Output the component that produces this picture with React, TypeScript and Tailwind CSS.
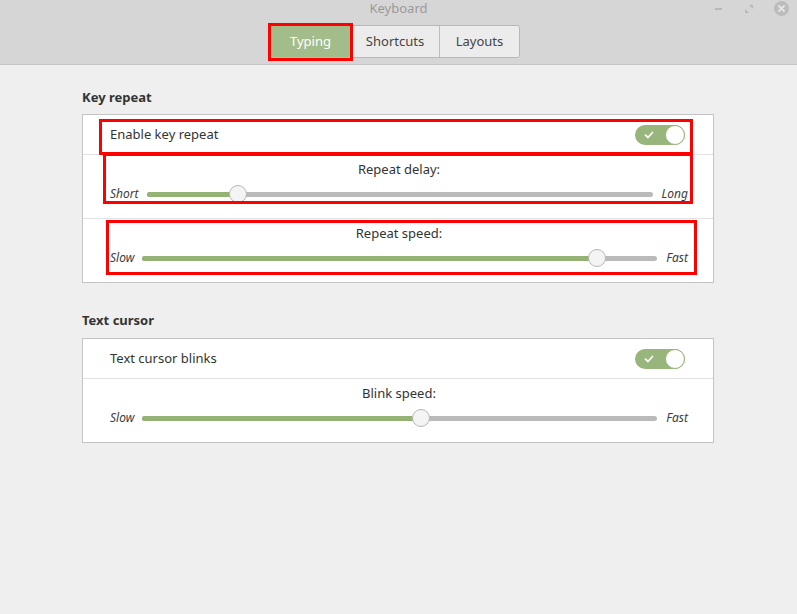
import React from 'react';

const font = { fontFamily: '"Noto Sans", "Open Sans", sans-serif' };

function Switch() {
  return (
    <div className="relative w-[50px] h-[20px] rounded-full bg-[#98b57c]">
      <svg className="absolute left-[9px] top-[6px]" width="10" height="8" viewBox="0 0 10 8">
        <path d="M1.5 4.2 L4 6.5 L8.5 1.5" stroke="white" strokeWidth="1.8" fill="none" strokeLinecap="round" strokeLinejoin="round" />
      </svg>
      <div className="absolute right-0 top-0 w-[20px] h-[20px] rounded-full bg-white border border-[#98b57c]" />
    </div>
  );
}

function Slider({ value, left, right }: { value: number; left: string; right: string }) {
  return (
    <div className="flex items-center h-[20px]">
      <span className="italic text-[12px] text-[#3c3c3c] pr-[8px]">{left}</span>
      <div className="relative flex-1 h-[5px] rounded-full bg-[#bababa]">
        <div className="absolute left-0 top-0 h-[5px] rounded-full bg-[#93b273]" style={{ width: `${value}%` }} />
        <div
          className="absolute top-1/2 w-[18px] h-[18px] -mt-[9px] -ml-[9px] rounded-full bg-[#f4f4f4] border border-[#b8b8b8]"
          style={{ left: `${value}%` }}
        />
      </div>
      <span className="italic text-[12px] text-[#3c3c3c] pl-[9px]">{right}</span>
    </div>
  );
}

function SliderRow({ label, value, left, right, last }: { label: string; value: number; left: string; right: string; last?: boolean }) {
  return (
    <div className={`pl-[27px] pr-[25px] pt-[5px] ${last ? 'h-[63px]' : 'h-[64px] border-b border-[#e2e2e2]'}`}>
      <div className="text-center text-[13px] text-[#333] h-[18px] leading-[18px]">{label}</div>
      <div className="mt-[6px]">
        <Slider value={value} left={left} right={right} />
      </div>
    </div>
  );
}

function ToggleRow({ label }: { label: string }) {
  return (
    <div className="h-[40px] pl-[27px] pr-[28px] pt-[1px] flex items-center justify-between border-b border-[#e2e2e2]">
      <span className="text-[13px] text-[#333]">{label}</span>
      <Switch />
    </div>
  );
}

function RedBox({ x, y, w, h }: { x: number; y: number; w: number; h: number }) {
  return (
    <div
      className="absolute border-[3px] border-[#ff0000] pointer-events-none"
      style={{ left: x, top: y, width: w, height: h }}
    />
  );
}

export default function App() {
  return (
    <div className="relative w-[797px] h-[614px] bg-[#efefef] overflow-hidden" style={font}>
      <header className="relative h-[65px] bg-[#d6d6d6] border-b border-[#c6c6c6]">
        <div className="text-center text-[13px] text-[#9a9a9a] leading-[17px]">Keyboard</div>
        <div className="absolute right-[8px] top-[1px] flex items-center gap-[15px] text-[#b4b4b4]">
          <div className="w-[7px] h-[2px] bg-[#b8b8b8]" />
          <svg width="8" height="8" viewBox="0 0 8 8" className="ml-[8px]">
            <path d="M0 8 L0 4 L4 8 Z M8 0 L8 4 L4 0 Z" fill="#b8b8b8" />
          </svg>
          <div className="w-[15px] h-[15px] rounded-full bg-[#bcbcbc] flex items-center justify-center ml-[6px]">
            <svg width="7" height="7" viewBox="0 0 7 7">
              <path d="M1 1 L6 6 M6 1 L1 6" stroke="#e6e6e6" strokeWidth="1.8" strokeLinecap="round" />
            </svg>
          </div>
        </div>
        <div className="absolute left-[270px] top-[25px] flex h-[33px] rounded-[3px] border border-[#b8b8b8] overflow-hidden text-[13px]">
          <div className="w-[79px] bg-[#a3bd8a] text-white flex items-center justify-center">Typing</div>
          <div className="w-[89px] bg-[#ececec] text-[#444] border-l border-[#bdbdbd] flex items-center justify-center">Shortcuts</div>
          <div className="w-[80px] bg-[#ececec] text-[#444] border-l border-[#bdbdbd] flex items-center justify-center">Layouts</div>
        </div>
      </header>

      <main className="w-[632px] ml-[82px]">
        <div className="pt-[23px] text-[13px] font-bold text-[#333] leading-[18px]">Key repeat</div>
        <div className="mt-[8px] bg-white border border-[#c4c4c4]">
          <ToggleRow label="Enable key repeat" />
          <SliderRow label="Repeat delay:" value={18} left="Short" right="Long" />
          <SliderRow label="Repeat speed:" value={88.3} left="Slow" right="Fast" last />
        </div>

        <div className="pt-[28px] text-[13px] font-bold text-[#333] leading-[18px]">Text cursor</div>
        <div className="mt-[9px] bg-white border border-[#c4c4c4]">
          <ToggleRow label="Text cursor blinks" />
          <SliderRow label="Blink speed:" value={54.2} left="Slow" right="Fast" last />
        </div>
      </main>

      <RedBox x={268} y={23} w={85} h={38} />
      <RedBox x={99} y={119} w={594} h={36} />
      <RedBox x={103} y={153} w={590} h={51} />
      <RedBox x={106} y={220} w={591} h={55} />
    </div>
  );
}
